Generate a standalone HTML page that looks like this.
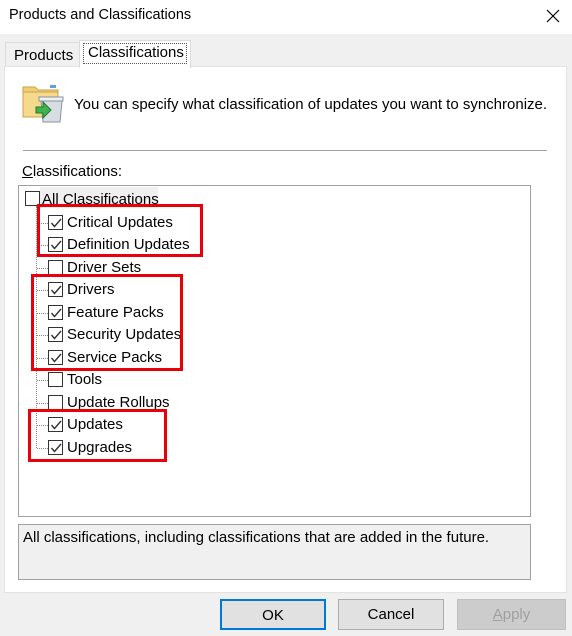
<!DOCTYPE html>
<html><head><meta charset="utf-8"><style>
*{margin:0;padding:0;box-sizing:border-box}
body{width:572px;height:636px;background:#f0f0f0;font-family:"Segoe UI","Liberation Sans",sans-serif;font-size:15px;color:#000;position:relative;overflow:hidden}
.abs{position:absolute}
.title{left:0;top:0;width:572px;height:34px;background:#fff}
.panel{left:4px;top:66px;width:563px;height:527px;background:#fff;border:1px solid #e3e3e3}
.cb{position:absolute;width:15px;height:15px;border:1px solid #333;background:#fff}
.cb svg{position:absolute;left:1px;top:1px}
.lbl{position:absolute;white-space:nowrap;font-size:15px;line-height:20px}
.red{position:absolute;border:3px solid #e8000b}
.btn{position:absolute;top:599px;height:31px;border:1px solid #adadad;background:#e1e1e1;text-align:center;line-height:29px;font-size:15px}
</style></head><body>
<div class="abs title"></div>
<div class="abs" style="left:9px;top:7px;font-size:14.5px">Products and Classifications</div>
<svg class="abs" style="left:546px;top:9px" width="14" height="14"><path d="M1 1L13 13M13 1L1 13" stroke="#000" stroke-width="1.2"/></svg>
<div class="abs" style="left:5px;top:42px;width:75px;height:24px;border-left:1px solid #dcdcdc;border-top:1px solid #dcdcdc"></div>
<div class="abs" style="left:14px;top:47px;font-size:15px">Products</div>
<div class="abs panel"></div>
<div class="abs" style="left:79px;top:40px;width:112px;height:28px;background:#fff;border:1px solid #dcdcdc;border-bottom:none"></div>
<div class="abs" style="left:83px;top:43px;width:104px;height:21px;border:1px dotted #555"></div>
<div class="abs" style="left:88px;top:44px;font-size:15px">Classifications</div>
<svg class="abs" style="left:22px;top:81px" width="42" height="42">
<path d="M1 6h12l3 3h20v27H1z" fill="#f1cd74" stroke="#c9a24b"/>
<rect x="1" y="11" width="35" height="25" fill="#f6da8c" stroke="#c9a24b"/>
<rect x="28" y="4" width="6" height="3" fill="#5aa0e0"/>
<path d="M18 18h22v2l-2 21H21l-2-21z" fill="#d8dde3" stroke="#8a939c"/>
<rect x="17" y="16" width="24" height="4" fill="#eef1f4" stroke="#8a939c"/>
<path d="M14 26h7v-5l8 8-8 8v-5h-7z" fill="#3fb34f" stroke="#1f7a2c"/>
</svg>
<div class="abs" style="left:74px;top:96px;font-size:15px">You can specify what classification of updates you want to synchronize.</div>
<div class="abs" style="left:23px;top:150px;width:524px;height:1px;background:#a0a0a0"></div>
<div class="abs" style="left:22px;top:163px;font-size:15px"><u>C</u>lassifications:</div>
<div class="abs" style="left:18px;top:185px;width:513px;height:332px;border:1px solid #a0a0a0;background:#fff"></div>
<div class="abs" style="left:40px;top:187px;width:118px;height:21px;background:#f0f0f0"></div>
<div class="cb" style="left:25px;top:191px"></div>
<div class="lbl" style="left:42px;top:190px">All Classifications</div>
<div class="abs" style="left:36px;top:206px;height:242px;border-left:1px dotted #888"></div>
<div id="tree"></div>
<script>
var items=[["Critical Updates",1],["Definition Updates",1],["Driver Sets",0],["Drivers",1],["Feature Packs",1],["Security Updates",1],["Service Packs",1],["Tools",0],["Update Rollups",0],["Updates",1],["Upgrades",1]];
var h="";items.forEach(function(it,i){var c=223+i*22.45;
h+='<div class="abs" style="left:37px;top:'+Math.round(c)+'px;width:11px;border-top:1px dotted #888"></div>';
h+='<div class="cb" style="left:48px;top:'+Math.round(c-8)+'px">'+(it[1]?'<svg width="12" height="12"><path d="M1.5 6L4.5 9.5L11 2" fill="none" stroke="#333" stroke-width="1.4"/></svg>':'')+'</div>';
h+='<div class="lbl" style="left:67px;top:'+Math.round(c-10)+'px">'+it[0]+'</div>';});
document.getElementById("tree").innerHTML=h;
</script>
<div class="red" style="left:37px;top:204px;width:166px;height:53px"></div>
<div class="red" style="left:31px;top:274px;width:152px;height:97px"></div>
<div class="red" style="left:28px;top:409px;width:139px;height:53px"></div>
<div class="abs" style="left:18px;top:524px;width:513px;height:56px;border:1px solid #a0a0a0;background:#f0f0f0"></div>
<div class="abs" style="left:23px;top:529px;font-size:15px">All classifications, including classifications that are added in the future.</div>
<div class="btn" style="left:220px;width:106px;border:2px solid #0078d7">OK</div>
<div class="btn" style="left:338px;width:106px">Cancel</div>
<div class="btn" style="left:457px;width:109px;background:#cccccc;border-color:#bfbfbf;color:#a0a0a0"><u>A</u>pply</div>
</body></html>
